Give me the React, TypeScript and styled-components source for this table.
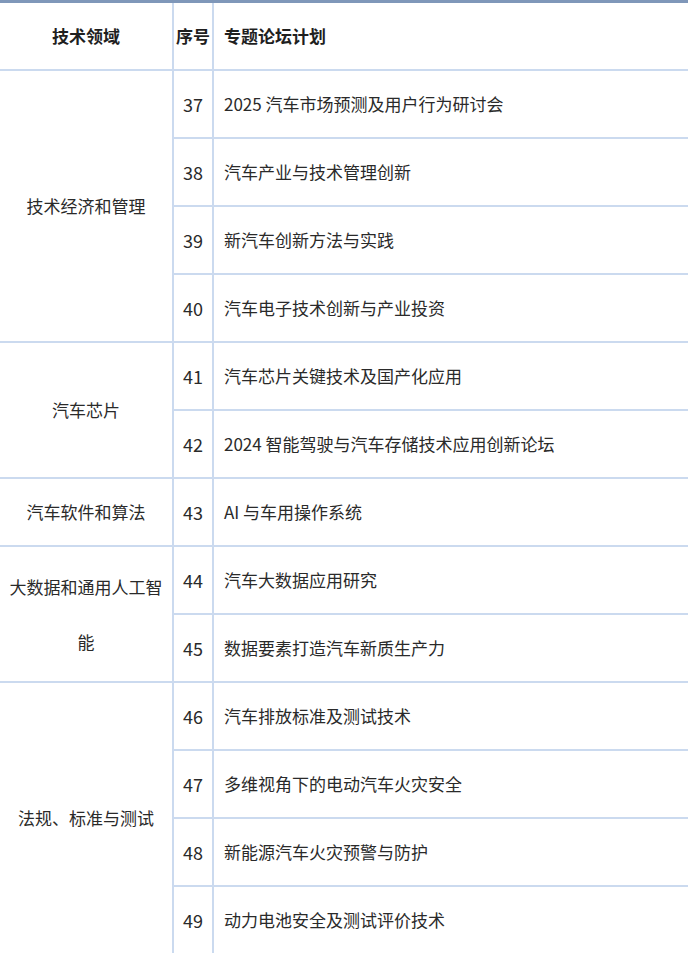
import styled, { createGlobalStyle } from "styled-components";

const GlobalStyle = createGlobalStyle`
  html, body {
    margin: 0;
    padding: 0;
    background: #ffffff;
  }
  body {
    font-family: "Noto Sans CJK SC", "Noto Sans", sans-serif;
    color: #2a2a2a;
  }
`;

interface Forum {
  no: number;
  title: string;
}

interface Domain {
  name: string;
  forums: Forum[];
}

const domains: Domain[] = [
  {
    name: "技术经济和管理",
    forums: [
      { no: 37, title: "2025 汽车市场预测及用户行为研讨会" },
      { no: 38, title: "汽车产业与技术管理创新" },
      { no: 39, title: "新汽车创新方法与实践" },
      { no: 40, title: "汽车电子技术创新与产业投资" },
    ],
  },
  {
    name: "汽车芯片",
    forums: [
      { no: 41, title: "汽车芯片关键技术及国产化应用" },
      { no: 42, title: "2024 智能驾驶与汽车存储技术应用创新论坛" },
    ],
  },
  {
    name: "汽车软件和算法",
    forums: [{ no: 43, title: "AI 与车用操作系统" }],
  },
  {
    name: "大数据和通用人工智能",
    forums: [
      { no: 44, title: "汽车大数据应用研究" },
      { no: 45, title: "数据要素打造汽车新质生产力" },
    ],
  },
  {
    name: "法规、标准与测试",
    forums: [
      { no: 46, title: "汽车排放标准及测试技术" },
      { no: 47, title: "多维视角下的电动汽车火灾安全" },
      { no: 48, title: "新能源汽车火灾预警与防护" },
      { no: 49, title: "动力电池安全及测试评价技术" },
    ],
  },
];

const LINE = "#cbdaef";

const Table = styled.table`
  width: 688px;
  border-collapse: collapse;
  table-layout: fixed;
  border-top: 3px solid #7f97b9;
  font-size: 17px;
`;

const HeadRow = styled.tr`
  height: 68px;
`;

const Row = styled.tr`
  height: 68px;
`;

const HeadCell = styled.th<{ $align?: string }>`
  font-weight: 700;
  color: #1f1f1f;
  text-align: ${(p) => p.$align ?? "center"};
  padding: 0 ${(p) => (p.$align === "left" ? "10px" : "0")};
  border-bottom: 2px solid ${LINE};
  border-right: 2px solid ${LINE};
  &:last-child {
    border-right: none;
  }
`;

const DomainCell = styled.td<{ $wrap?: boolean }>`
  text-align: center;
  vertical-align: middle;
  padding: 0 4px;
  line-height: ${(p) => (p.$wrap ? "55px" : "normal")};
  border-bottom: 2px solid ${LINE};
  border-right: 2px solid ${LINE};
`;

const NoCell = styled.td`
  text-align: center;
  padding: 0;
  font-size: 18px;
  border-bottom: 2px solid ${LINE};
  border-right: 2px solid ${LINE};
`;

const TitleCell = styled.td`
  text-align: left;
  padding: 0 10px;
  white-space: nowrap;
  border-bottom: 2px solid ${LINE};
`;

export default function App() {
  return (
    <>
      <GlobalStyle />
      <Table>
        <colgroup>
          <col style={{ width: 173 }} />
          <col style={{ width: 40 }} />
          <col />
        </colgroup>
        <thead>
          <HeadRow>
            <HeadCell>技术领域</HeadCell>
            <HeadCell>序号</HeadCell>
            <HeadCell $align="left">专题论坛计划</HeadCell>
          </HeadRow>
        </thead>
        <tbody>
          {domains.map((d) =>
            d.forums.map((f, i) => (
              <Row key={f.no}>
                {i === 0 && (
                  <DomainCell
                    rowSpan={d.forums.length}
                    $wrap={d.name.length > 9}
                  >
                    {d.name}
                  </DomainCell>
                )}
                <NoCell>{f.no}</NoCell>
                <TitleCell>{f.title}</TitleCell>
              </Row>
            ))
          )}
        </tbody>
      </Table>
    </>
  );
}
